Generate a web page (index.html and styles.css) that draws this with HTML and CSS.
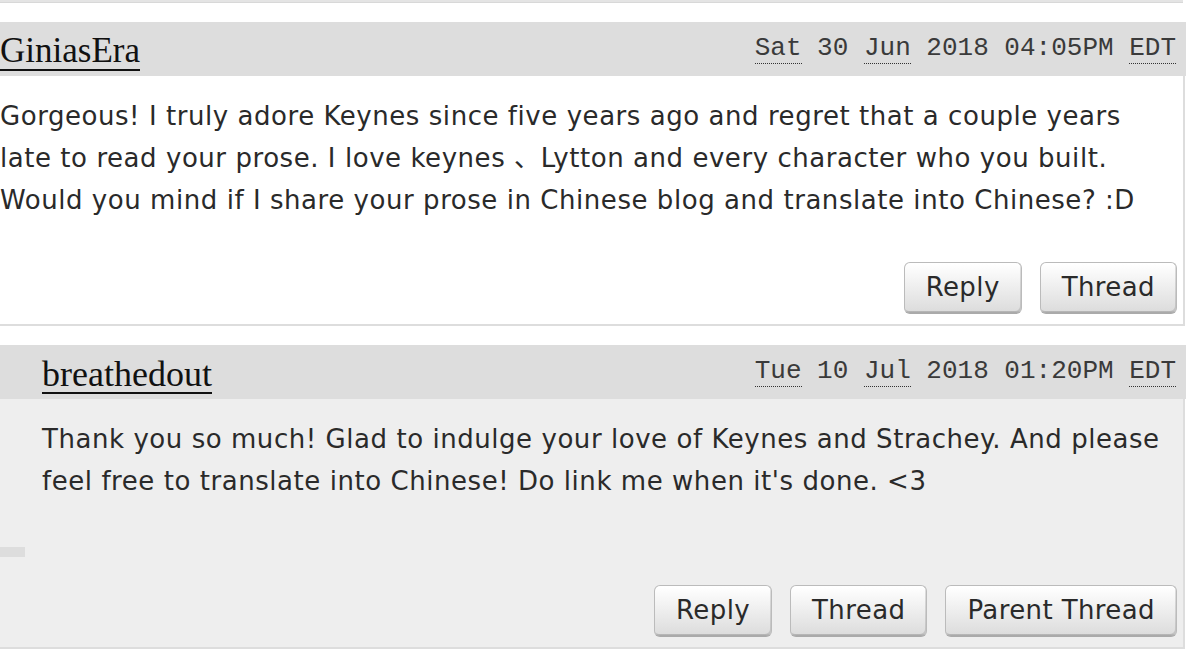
FILE: index.html
```html
<!DOCTYPE html>
<html>
<head>
<meta charset="utf-8">
<link rel="stylesheet" href="styles.css">
</head>
<body>
<div class="prev"></div>
<ol class="thread">
  <li class="comment odd">
    <h4 class="heading">
      <a class="byline" href="#">GiniasEra</a>
      <span class="posted"><abbr>Sat</abbr> 30 <abbr>Jun</abbr> 2018 04:05PM <abbr>EDT</abbr></span>
    </h4>
    <div class="body">
      <p class="text">Gorgeous! I truly adore Keynes since five years ago and regret that a couple years late to read your prose. I love keynes 、Lytton and every character who you built. Would you mind if I share your prose in Chinese blog and translate into Chinese? :D</p>
      <div class="actions">
        <a class="btn" href="#">Reply</a>
        <a class="btn" href="#">Thread</a>
      </div>
    </div>
  </li>
  <li class="comment even">
    <h4 class="heading">
      <a class="byline" href="#">breathedout</a>
      <span class="posted"><abbr>Tue</abbr> 10 <abbr>Jul</abbr> 2018 01:20PM <abbr>EDT</abbr></span>
    </h4>
    <div class="body">
      <p class="text">Thank you so much! Glad to indulge your love of Keynes and Strachey. And please feel free to translate into Chinese! Do link me when it's done. &lt;3</p>
      <div class="icon"></div>
      <div class="actions">
        <a class="btn" href="#">Reply</a>
        <a class="btn" href="#">Thread</a>
        <a class="btn" href="#">Parent Thread</a>
      </div>
    </div>
  </li>
</ol>
</body>
</html>
```

FILE: styles.css
```css
html, body {
  margin: 0;
  padding: 0;
  background: #fff;
}
body {
  font-family: "DejaVu Sans", "Noto Sans CJK SC", sans-serif;
  color: #2a2a2a;
  width: 1186px;
  overflow: hidden;
}
.prev {
  height: 3px;
  width: 1183px;
  background: #e4e4e4;
  border-bottom: 1px solid #d8d8d8;
  box-sizing: border-box;
}
.thread {
  list-style: none;
  margin: 0;
  padding: 0;
}
.comment {
  margin-top: 19px;
}
.heading {
  margin: 0;
  height: 54px;
  background: #ddd;
  display: flex;
  justify-content: space-between;
  align-items: center;
  padding: 0 10px 0 0;
  font-weight: normal;
}
.even .heading {
  padding-left: 42px;
}
.byline {
  font-family: "Liberation Serif", serif;
  font-size: 35px;
  line-height: 36px;
  color: #111;
  text-decoration: none;
  border-bottom: 2px solid #111;
  margin-top: 6px;
}
.even .byline {
  font-size: 36px;
}
.posted {
  font-family: "Liberation Mono", monospace;
  font-size: 26px;
  color: #3a3a3a;
  margin-top: -3px;
}
.posted abbr {
  text-decoration: none;
  border-bottom: 1px dotted #333;
}
.body {
  border-right: 2px solid #ddd;
  border-bottom: 2px solid #ddd;
  margin-right: 1px;
  padding: 19px 6px 10px 0;
  background: #fff;
}
.even .body {
  background: #eee;
  padding-left: 42px;
}
.text {
  margin: 0;
  font-size: 26px;
  letter-spacing: 0.55px;
  line-height: 42px;
}
.icon {
  width: 25px;
  height: 10px;
  background: #ddd;
  margin: 45px 0 0 -42px;
}
.actions {
  display: flex;
  justify-content: flex-end;
  gap: 18px;
  margin-top: 41px;
}
.even .actions {
  margin-top: 28px;
}
.btn {
  display: block;
  height: 50px;
  line-height: 48px;
  padding: 0 21px;
  font-size: 26px;
  letter-spacing: 0.4px;
  color: #2a2a2a;
  text-decoration: none;
  border: 1px solid #bbb;
  border-bottom-color: #aaa;
  border-radius: 6px;
  background: linear-gradient(#fff 2%, #ddd 95%, #bbb 100%);
  box-shadow: inset -1px -2px 0 rgba(0,0,0,0.12);
}
```
